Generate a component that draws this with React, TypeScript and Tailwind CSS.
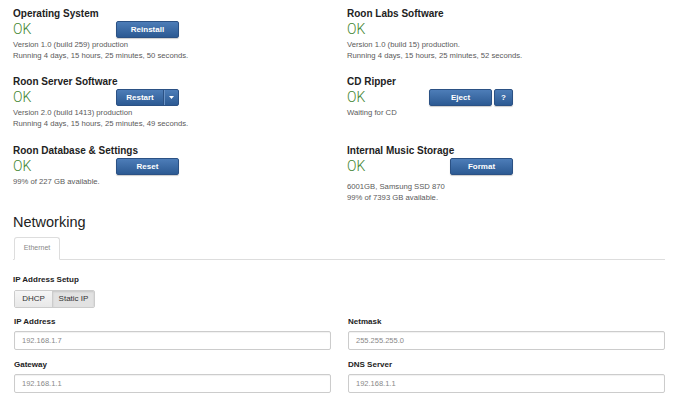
import { ReactNode } from "react";

const font = { fontFamily: '"Liberation Sans", Arial, sans-serif' };

function Btn({ children, className = "" }: { children: ReactNode; className?: string }) {
  return (
    <button
      className={`h-[17px] rounded-[2px] border border-[#2b5184] bg-gradient-to-b from-[#4d7db8] to-[#2c5a93] text-[8px] font-bold text-white shadow-[0_1px_1px_rgba(0,0,0,0.2)] ${className}`}
    >
      {children}
    </button>
  );
}

function Status({
  title, actions, lines, h, gap = false,
}: {
  title: string;
  actions?: ReactNode;
  lines: string[];
  h: string;
  gap?: boolean;
}) {
  return (
    <div className={h}>
      <div className="h-[14px] text-[10px] font-bold leading-[14px] text-[#222]">{title}</div>
      <div className="flex h-[17px] w-[166px] items-center justify-between">
        <span className="text-[14px] font-light leading-[17px] text-[#3f8530]" style={{ fontFamily: "Roboto, sans-serif" }}>OK</span>
        <div className="flex gap-[2px]">{actions}</div>
      </div>
      <div className={`text-[7.7px] leading-[11px] text-[#5a5a5a] ${gap ? "mt-[6px]" : "mt-[1px]"}`}>
        {lines.map((l) => (
          <div key={l}>{l}</div>
        ))}
      </div>
    </div>
  );
}

function Field({ label, value }: { label: string; value: string }) {
  return (
    <div>
      <div className="text-[8px] font-bold leading-[12px] text-[#222]">{label}</div>
      <div className="mt-[3px] flex h-[19px] items-center rounded-[2px] border border-[#ccc] pl-[7px] text-[7.5px] text-[#888] shadow-[inset_0_1px_1px_rgba(0,0,0,0.06)]">
        {value}
      </div>
    </div>
  );
}

export default function App() {
  return (
    <div className="h-[403px] w-[690px] overflow-hidden bg-white pl-[13px] pr-[25px] pt-[7px]" style={font}>
      <div className="grid grid-cols-2 gap-x-[16px]">
        <div>
          <Status
            h="h-[68px]"
            title="Operating System"
            actions={<Btn className="w-[63px]">Reinstall</Btn>}
            lines={["Version 1.0 (build 259) production", "Running 4 days, 15 hours, 25 minutes, 50 seconds."]}
          />
          <Status
            h="h-[69px]"
            title="Roon Server Software"
            actions={
              <div className="flex h-[17px] w-[63px] overflow-hidden rounded-[2px] border border-[#2b5184] bg-gradient-to-b from-[#4d7db8] to-[#2c5a93] text-[8px] font-bold text-white">
                <span className="flex flex-1 items-center justify-center border-r border-[#2b5184]">Restart</span>
                <span className="flex w-[14px] items-center justify-center border-l border-[#6a93c6]">
                  <svg width="5" height="3" viewBox="0 0 5 3"><path d="M0 0h5L2.5 3z" fill="#fff" /></svg>
                </span>
              </div>
            }
            lines={["Version 2.0 (build 1413) production", "Running 4 days, 15 hours, 25 minutes, 49 seconds."]}
          />
          <Status
            h="h-[68px]"
            title="Roon Database & Settings"
            actions={<Btn className="w-[63px]">Reset</Btn>}
            lines={["99% of 227 GB available."]}
          />
        </div>
        <div>
          <Status
            h="h-[68px]"
            title="Roon Labs Software"
            lines={["Version 1.0 (build 15) production.", "Running 4 days, 15 hours, 25 minutes, 52 seconds."]}
          />
          <Status
            h="h-[69px]"
            title="CD Ripper"
            actions={
              <>
                <Btn className="w-[63px]">Eject</Btn>
                <Btn className="w-[19px]">?</Btn>
              </>
            }
            lines={["Waiting for CD"]}
          />
          <Status
            h="h-[68px]"
            title="Internal Music Storage"
            actions={<Btn className="w-[63px]">Format</Btn>}
            lines={["6001GB, Samsung SSD 870", "99% of 7393 GB available."]}
            gap
          />
        </div>
      </div>

      <h2 className="text-[14.5px] leading-[20px] text-[#222]">Networking</h2>
      <div className="mt-[5px] flex border-b border-[#ddd]">
        <div className="-mb-px ml-px flex h-[23px] w-[46px] items-center justify-center rounded-t-[3px] border border-b-white border-[#ddd] bg-white text-[7px] text-[#888]">
          Ethernet
        </div>
      </div>

      <div className="mt-[14px] text-[8px] font-bold leading-[12px] text-[#222]">IP Address Setup</div>
      <div className="ml-px mt-[4px] flex h-[18px] w-[81px] overflow-hidden rounded-[2px] border border-[#ccc] text-[8px] text-[#333]">
        <span className="flex w-[37px] items-center justify-center bg-gradient-to-b from-[#f6f6f6] to-[#e8e8e8]">DHCP</span>
        <span className="flex flex-1 items-center justify-center border-l border-[#ccc] bg-[#e2e2e2] shadow-[inset_0_1px_2px_rgba(0,0,0,0.12)]">Static IP</span>
      </div>

      <div className="mt-[8px] grid grid-cols-2 gap-x-[17px] gap-y-[9px] pl-px">
        <Field label="IP Address" value="192.168.1.7" />
        <Field label="Netmask" value="255.255.255.0" />
        <Field label="Gateway" value="192.168.1.1" />
        <Field label="DNS Server" value="192.168.1.1" />
      </div>
    </div>
  );
}
